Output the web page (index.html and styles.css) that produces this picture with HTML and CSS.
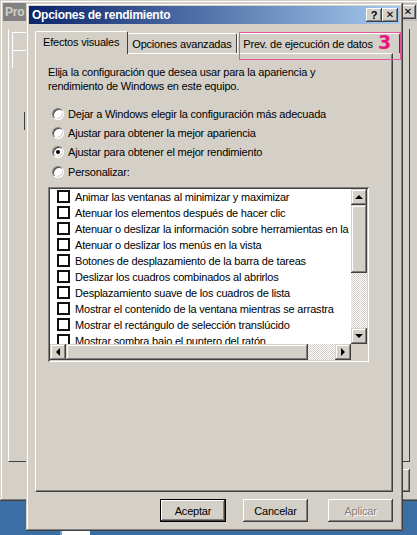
FILE: index.html
```html
<!DOCTYPE html>
<html lang="es">
<head>
  <meta charset="UTF-8">
  <meta name="viewport" content="width=device-width, initial-scale=1.0">
  <title>Opciones de rendimiento</title>
  <link rel="stylesheet" href="styles.css">
</head>
<body>
  <div class="desktop">

    <!-- ventana de atrás (Propiedades del sistema) -->
    <div class="bgwin">
      <div class="bgtitle">
        <span class="bgtitle-text">Pro</span>
        <span class="capbtn bgclose"><span class="glyph-x">✕</span></span>
      </div>
      <div class="bgbody">
        <div class="bgpanel">
          <div class="bgbox"></div>
          <div class="bgbox"></div>
          <div class="bgline"></div>
        </div>
        <div class="bgbtnrow"><div class="bgbtn"></div></div>
      </div>
    </div>

    <!-- diálogo principal -->
    <div class="dialog">
      <div class="titlebar">
        <span class="title">Opciones de rendimiento</span>
        <div class="capbtns">
          <span class="capbtn">?</span>
          <span class="capbtn"><span class="glyph-x">✕</span></span>
        </div>
      </div>

      <div class="tabs">
        <div class="tab tab-active">Efectos visuales</div>
        <div class="tab">Opciones avanzadas</div>
        <div class="tab tab-last">Prev. de ejecución de datos</div>
      </div>

      <div class="panel">
        <p class="intro">Elija la configuración que desea usar para la apariencia y<br>rendimiento de Windows en este equipo.</p>

        <div class="radios">
          <label class="radio"><span class="radio-dot"></span>Dejar a Windows elegir la configuración más adecuada</label>
          <label class="radio"><span class="radio-dot"></span>Ajustar para obtener la mejor apariencia</label>
          <label class="radio"><span class="radio-dot checked"></span>Ajustar para obtener el mejor rendimiento</label>
          <label class="radio"><span class="radio-dot"></span>Personalizar:</label>
        </div>

        <div class="listbox">
          <div class="list-main">
            <div class="items">
              <div class="item"><span class="check"></span>Animar las ventanas al minimizar y maximizar</div>
              <div class="item"><span class="check"></span>Atenuar los elementos después de hacer clic</div>
              <div class="item"><span class="check"></span>Atenuar o deslizar la información sobre herramientas en la vista</div>
              <div class="item"><span class="check"></span>Atenuar o deslizar los menús en la vista</div>
              <div class="item"><span class="check"></span>Botones de desplazamiento de la barra de tareas</div>
              <div class="item"><span class="check"></span>Deslizar los cuadros combinados al abrirlos</div>
              <div class="item"><span class="check"></span>Desplazamiento suave de los cuadros de lista</div>
              <div class="item"><span class="check"></span>Mostrar el contenido de la ventana mientras se arrastra</div>
              <div class="item"><span class="check"></span>Mostrar el rectángulo de selección translúcido</div>
              <div class="item"><span class="check"></span>Mostrar sombra bajo el puntero del ratón</div>
            </div>
            <div class="vscroll">
              <span class="sbtn"><i class="arrow up"></i></span>
              <span class="vthumb"></span>
              <span class="track"></span>
              <span class="sbtn"><i class="arrow down"></i></span>
            </div>
          </div>
          <div class="hscroll">
            <span class="sbtn"><i class="arrow left"></i></span>
            <span class="hthumb"></span>
            <span class="track"></span>
            <span class="sbtn"><i class="arrow right"></i></span>
            <span class="corner"></span>
          </div>
        </div>
      </div>

      <div class="buttons">
        <button class="btn btn-default">Aceptar</button>
        <button class="btn btn-cancel">Cancelar</button>
        <button class="btn btn-disabled">Aplicar</button>
      </div>
    </div>

    <!-- marca rosa sobre la tercera pestaña -->
    <div class="mark"><span class="mark-num">3</span></div>

    <div class="taskicon"></div>
  </div>
</body>
</html>
```

FILE: styles.css
```css
* {
  margin: 0;
  padding: 0;
  box-sizing: border-box;
}
body {
  background: #3a6ea5;
  font-family: "Liberation Sans", Arial, sans-serif;
  font-size: 11px;
  letter-spacing: -0.2px;
  color: #000;
}
.desktop {
  position: relative;
  width: 417px;
  height: 535px;
  overflow: hidden;
  background: #3a6ea5;
}

/* ---- ventana de atrás ---- */
.bgwin {
  position: absolute;
  left: 0;
  top: 0;
  width: 421px;
  height: 501px;
  padding: 3px;
  background: #d4d0c8;
  box-shadow: inset -1px -1px #404040, inset 1px 1px #d4d0c8, inset -2px -2px #808080, inset 2px 2px #fff;
  display: flex;
  flex-direction: column;
}
.bgtitle {
  height: 18px;
  display: flex;
  align-items: center;
  justify-content: space-between;
  padding: 0 2px 0 2px;
  background: linear-gradient(to right, #808080, #c0c0c0);
}
.bgtitle-text {
  color: #d4d0c8;
  font-weight: bold;
  font-size: 12px;
}
.bgbody {
  flex: 1;
  display: flex;
  flex-direction: column;
  padding: 8px 8px 6px 5px;
}
.bgpanel {
  flex: 1;
  border-left: 1px solid #fff;
  border-bottom: 1px solid #404040;
  border-right: 1px solid #404040;
  padding: 3px 0 0 3px;
}
.bgbox {
  width: 16px;
  height: 18px;
  border-left: 1px solid #fff;
  border-top: 1px solid #fff;
}
.bgline {
  width: 1px;
  height: 18px;
  margin: 44px 0 0 12px;
  background: #404040;
}
.bgbtnrow {
  display: flex;
  justify-content: flex-end;
  margin-top: 7px;
}
.bgbtn {
  width: 70px;
  height: 23px;
  box-shadow: inset -1px -1px #404040, inset 1px 1px #fff, inset -2px -2px #808080;
}

/* ---- diálogo ---- */
.dialog {
  position: absolute;
  left: 26px;
  top: 3px;
  width: 377px;
  height: 528px;
  padding: 3px;
  background: #d4d0c8;
  box-shadow: inset -1px -1px #404040, inset 1px 1px #d4d0c8, inset -2px -2px #808080, inset 2px 2px #fff;
}
.titlebar {
  height: 18px;
  display: flex;
  align-items: center;
  justify-content: space-between;
  padding: 0 2px 0 3px;
  background: linear-gradient(to right, #0a246a, #a6caf0);
}
.title {
  color: #fff;
  font-weight: bold;
  font-size: 12px;
  letter-spacing: -0.25px;
}
.capbtns {
  display: flex;
}
.capbtn {
  width: 16px;
  height: 14px;
  display: flex;
  align-items: center;
  justify-content: center;
  background: #d4d0c8;
  font-weight: bold;
  font-size: 11px;
  line-height: 1;
  letter-spacing: 0;
  box-shadow: inset -1px -1px #404040, inset 1px 1px #fff, inset -2px -2px #808080;
}
.glyph-x {
  font-family: "DejaVu Sans", sans-serif;
  font-size: 10px;
}

.tabs {
  display: flex;
  margin: 9px 0 0 6px;
  height: 20px;
  align-items: flex-end;
}
.tab {
  height: 20px;
  padding: 4px 6px 0 5px;
  border-top: 1px solid #fff;
  border-left: 1px solid #fff;
  border-right: 1px solid #404040;
  border-radius: 2px 2px 0 0;
  white-space: nowrap;
}
.tab-active {
  position: relative;
  z-index: 1;
  height: 23px;
  margin-bottom: -1px;
  padding: 4px 8px 0 7px;
  background: #d4d0c8;
}
.tab:nth-child(2) {
  border-left: none;
  width: 109px;
  padding-left: 4px;
}
.tab-last {
  flex: 1;
  padding-left: 5px;
}

.panel {
  margin-left: 6px;
  width: 358px;
  height: 439px;
  border-top: 1px solid #fff;
  border-left: 1px solid #fff;
  border-right: 1px solid #404040;
  border-bottom: 1px solid #404040;
  box-shadow: inset -1px -1px #808080;
  padding: 11px 12px 0 12px;
}
.intro {
  line-height: 14px;
}
.radios {
  margin: 11px 0 0 4px;
  display: flex;
  flex-direction: column;
}
.radio {
  height: 19.4px;
  display: flex;
  align-items: center;
  gap: 4px;
}
.radio-dot {
  position: relative;
  width: 12px;
  height: 12px;
  border-radius: 50%;
  background: #fff;
  border: 1px solid;
  border-color: #808080 #fff #fff #808080;
  box-shadow: inset 1px 1px #404040, inset -1px -1px #d4d0c8;
}
.radio-dot.checked::after {
  content: "";
  position: absolute;
  left: 3px;
  top: 3px;
  width: 4px;
  height: 4px;
  border-radius: 50%;
  background: #000;
}

.listbox {
  margin-top: 5px;
  width: 321px;
  height: 175px;
  padding: 2px;
  background: #fff;
  box-shadow: inset 1px 1px #808080, inset -1px -1px #fff, inset 2px 2px #404040, inset -2px -2px #d4d0c8;
  display: flex;
  flex-direction: column;
}
.list-main {
  height: 155px;
  display: flex;
}
.items {
  flex: 1;
  overflow: hidden;
  padding: 0 0 0 7px;
}
.item {
  height: 16px;
  display: flex;
  align-items: center;
  gap: 5px;
  white-space: nowrap;
}
.check {
  flex: none;
  width: 13px;
  height: 13px;
  border: 2px solid #111;
  background: #fff;
}
.vscroll {
  width: 16px;
  display: flex;
  flex-direction: column;
}
.hscroll {
  height: 16px;
  display: flex;
}
.sbtn {
  flex: none;
  width: 16px;
  height: 16px;
  display: flex;
  align-items: center;
  justify-content: center;
  background: #d4d0c8;
  box-shadow: inset -1px -1px #404040, inset 1px 1px #d4d0c8, inset -2px -2px #808080, inset 2px 2px #fff;
}
.vthumb {
  height: 68px;
  background: #d4d0c8;
  box-shadow: inset -1px -1px #404040, inset 1px 1px #d4d0c8, inset -2px -2px #808080, inset 2px 2px #fff;
}
.hthumb {
  width: 242px;
  background: #d4d0c8;
  box-shadow: inset -1px -1px #404040, inset 1px 1px #d4d0c8, inset -2px -2px #808080, inset 2px 2px #fff;
}
.track {
  flex: 1;
  background: repeating-conic-gradient(#fff 0 25%, #d4d0c8 0 50%) 0 0 / 2px 2px;
}
.corner {
  width: 16px;
  background: #d4d0c8;
}
.arrow {
  width: 0;
  height: 0;
  border: 0 solid transparent;
}
.arrow.up {
  border-width: 0 4px 4px 4px;
  border-bottom-color: #000;
}
.arrow.down {
  border-width: 4px 4px 0 4px;
  border-top-color: #000;
}
.arrow.left {
  border-width: 4px 4px 4px 0;
  border-right-color: #000;
}
.arrow.right {
  border-width: 4px 0 4px 4px;
  border-left-color: #000;
}

.buttons {
  display: flex;
  justify-content: flex-end;
  margin: 7px 7px 0 0;
}
.btn {
  height: 23px;
  width: 65px;
  font-family: "Liberation Sans", Arial, sans-serif;
  font-size: 11px;
  letter-spacing: -0.2px;
  background: #d4d0c8;
  border: none;
  box-shadow: inset -1px -1px #404040, inset 1px 1px #fff, inset -2px -2px #808080, inset 2px 2px #d4d0c8;
}
.btn-default {
  width: 66px;
  margin-right: 17px;
  box-shadow: inset 0 0 0 1px #000, inset -2px -2px #404040, inset 2px 2px #fff, inset -3px -3px #808080;
}
.btn-cancel {
  margin-right: 20px;
}
.btn-disabled {
  color: #808080;
  text-shadow: 1px 1px #fff;
}

/* ---- anotación ---- */
.mark {
  position: absolute;
  left: 239px;
  top: 32px;
  width: 162px;
  height: 28px;
  border: 1px solid #e2579a;
}
.mark-num {
  position: absolute;
  left: 138px;
  top: -1px;
  color: #e8187c;
  font-family: "DejaVu Sans", sans-serif;
  font-weight: bold;
  font-size: 19px;
  line-height: 20px;
}
.taskicon {
  position: absolute;
  left: 60px;
  top: 531px;
  width: 30px;
  height: 4px;
  background: #fff;
  border-left: 2px solid #6fa0d8;
}
```
